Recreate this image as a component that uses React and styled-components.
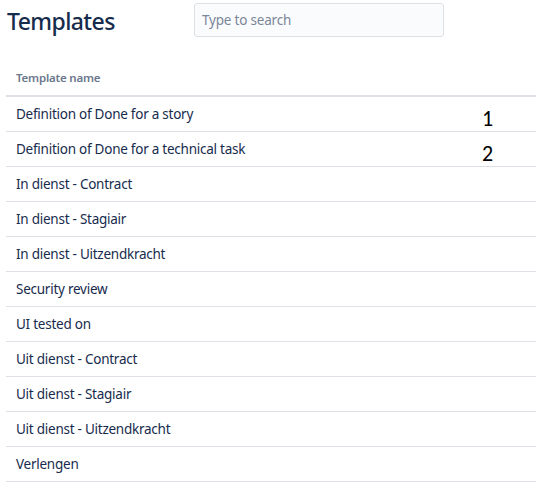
import React from 'react';
import styled, {createGlobalStyle} from 'styled-components';

const GlobalStyle = createGlobalStyle`
    body {
        margin: 0;
        background: #ffffff;
        font-family: "Segoe UI", "Noto Sans", "Open Sans", sans-serif;
        color: #172B4D;
    }
`

const Page = styled.div`
    padding: 0 0 0 6px;
    width: 530px;
`

const TopBar = styled.div`
    display: flex;
    align-items: flex-start;
    height: 60px;
`

const Title = styled.h1`
    margin: 5px 0 0 1px;
    font-size: 23px;
    font-weight: 500;
    letter-spacing: -0.6px;
    line-height: 32px;
    color: #172B4D;
    width: 187px;
`

const Search = styled.input`
    margin-top: 3px;
    box-sizing: border-box;
    width: 250px;
    height: 34px;
    padding: 0 7px;
    border: 1px solid #DFE1E6;
    border-radius: 3px;
    background: #FAFBFC;
    font-family: inherit;
    font-size: 13.5px;
    letter-spacing: -0.2px;
    color: #172B4D;
    outline: none;
    &::placeholder {
        color: #7A869A;
    }
`

const Table = styled.div`
    width: 530px;
`

const HeadRow = styled.div`
    height: 35px;
    display: flex;
    align-items: center;
    padding-left: 10px;
    border-bottom: 2px solid #DFE1E6;
    font-size: 11.5px;
    font-weight: 600;
    letter-spacing: -0.2px;
    color: #6B778C;
`

const Row = styled.div`
    height: 34px;
    display: flex;
    align-items: center;
    padding-left: 10px;
    border-bottom: 1px solid #DFE1E6;
    font-size: 13.5px;
    letter-spacing: -0.25px;
    color: #172B4D;
`

const Name = styled.span`
    flex: 1;
`

const Marker = styled.span`
    width: 54px;
    padding-top: 9px;
    font-family: "Carlito", "Open Sans", sans-serif;
    font-size: 22px;
    letter-spacing: 0;
    color: #000000;
`

const templates = [
    {name: "Definition of Done for a story", mark: "1"},
    {name: "Definition of Done for a technical task", mark: "2"},
    {name: "In dienst - Contract"},
    {name: "In dienst - Stagiair"},
    {name: "In dienst - Uitzendkracht"},
    {name: "Security review"},
    {name: "UI tested on"},
    {name: "Uit dienst - Contract"},
    {name: "Uit dienst - Stagiair"},
    {name: "Uit dienst - Uitzendkracht"},
    {name: "Verlengen"},
]

const App = () => {
    return (
        <Page>
            <GlobalStyle />
            <TopBar>
                <Title>Templates</Title>
                <Search placeholder="Type to search" />
            </TopBar>
            <Table>
                <HeadRow>Template name</HeadRow>
                {templates.map(t => (
                    <Row key={t.name}>
                        <Name>{t.name}</Name>
                        {t.mark && <Marker>{t.mark}</Marker>}
                    </Row>
                ))}
            </Table>
        </Page>
    )
}

export default App
